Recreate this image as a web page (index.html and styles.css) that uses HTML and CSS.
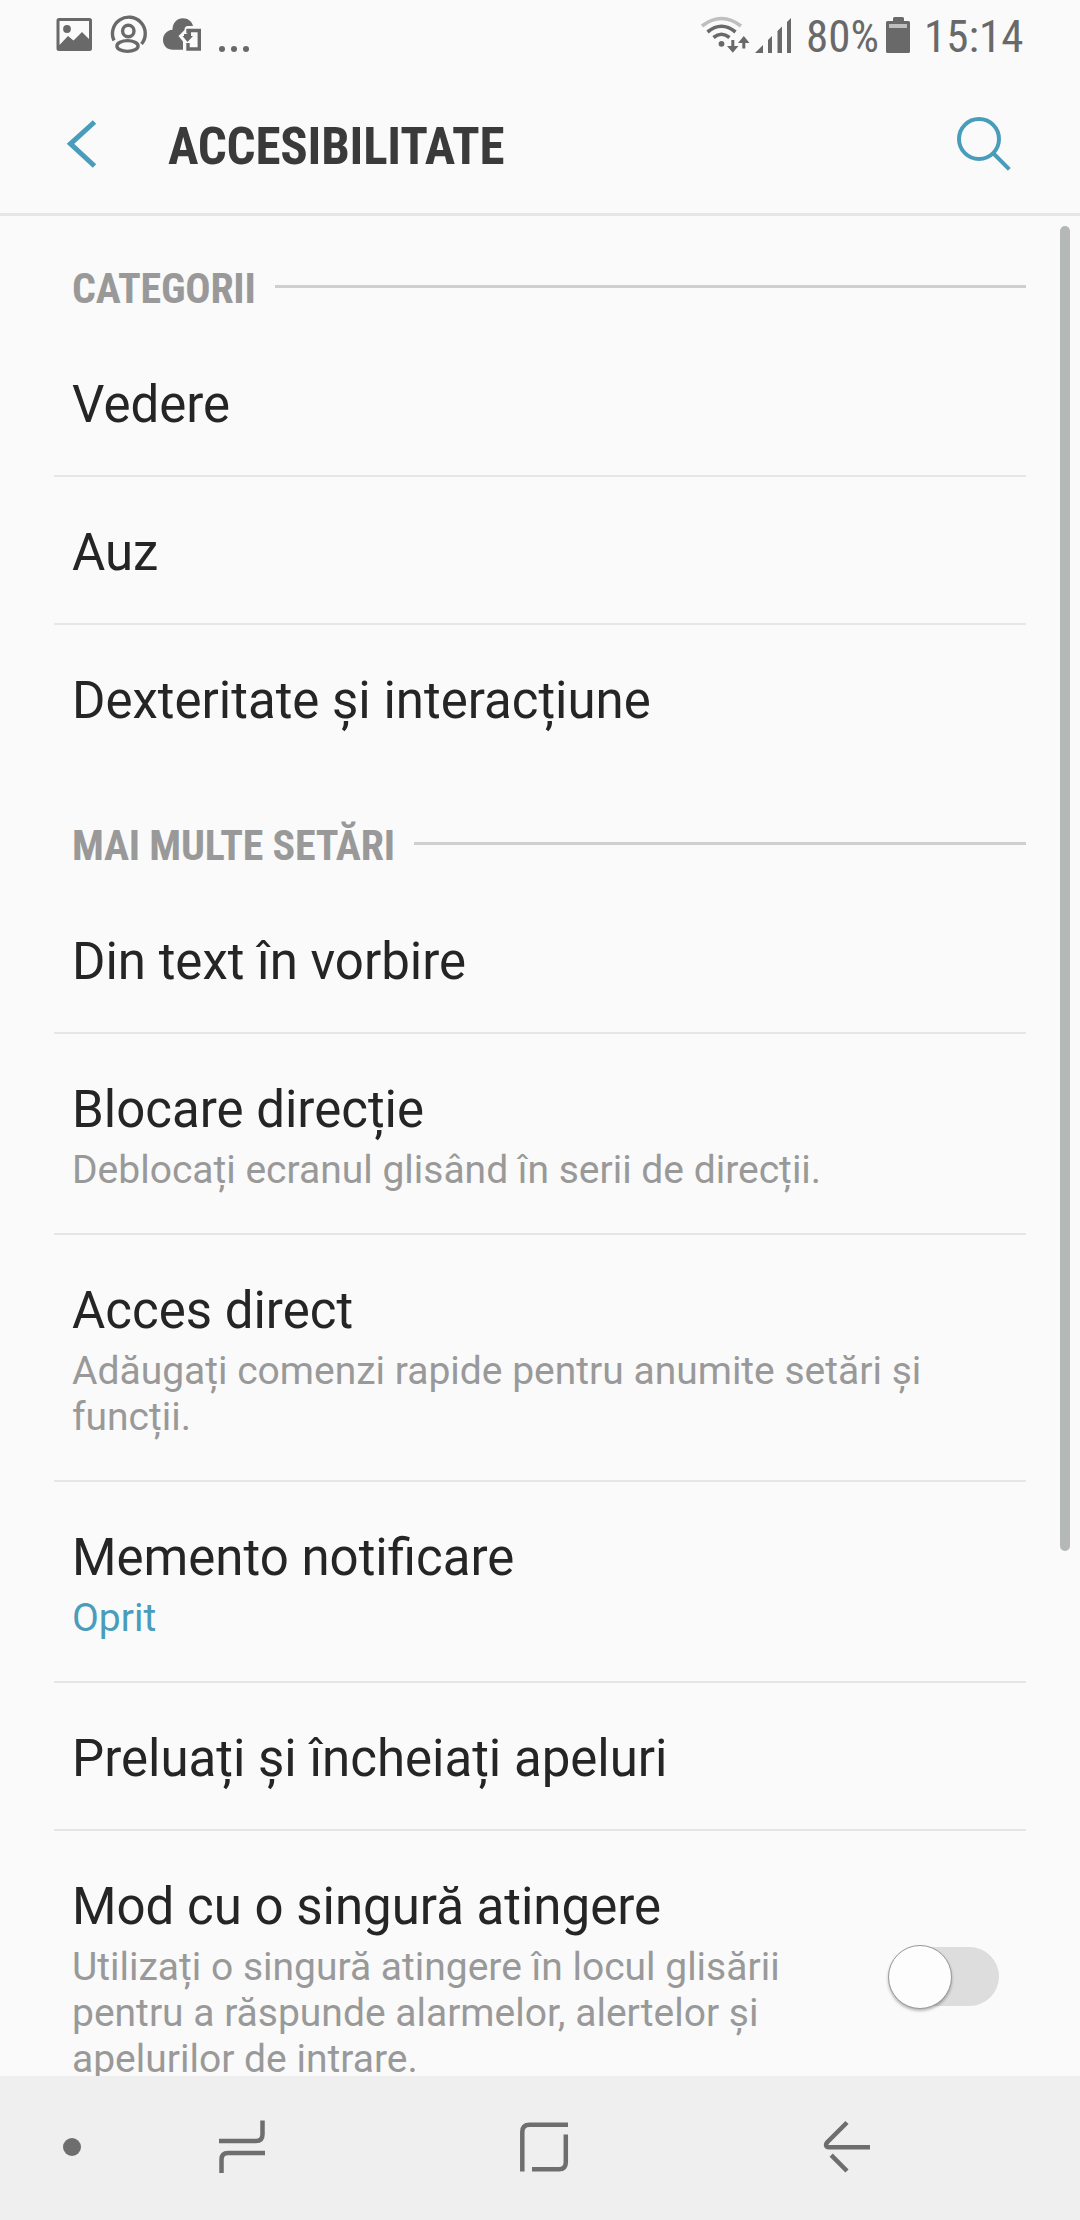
FILE: index.html
```html
<!DOCTYPE html>
<html lang="ro">
<head>
<meta charset="utf-8">
<title>Accesibilitate</title>
<link rel="stylesheet" href="styles.css">
</head>
<body>
<div class="screen">
  <header class="statusbar">
    <svg class="notifications" width="210" height="72" viewBox="40 0 210 72">
      <path fill="#696969" fill-rule="evenodd" d="M59 18H89.500Q92 18 92 20.500V48.500Q92 51 89.500 51H59Q56.500 51 56.500 48.500V20.500Q56.500 18 59 18ZM59.500 21V45L68 36L73.500 40.500L82 32L89 39V21Z"/>
      <circle cx="67" cy="29" r="3.900" fill="#696969"/>
      <g fill="none" stroke="#696969" stroke-width="3.400">
        <path d="M114 40.500A16.400 16.400 0 1 1 141.500 44"/>
        <circle cx="128.300" cy="31" r="5.700"/>
        <ellipse cx="127.500" cy="46" rx="10.600" ry="5.400"/>
      </g>
      <path fill="#696969" d="M183 49.800H173C167 49.800 163 45.500 163 40C163 34.500 167 30.300 172.500 29.800C172.500 23 177 18.300 183 18.300C188 18.300 192 21.500 193 26H188Q184.500 26 184.500 30L178.500 36L183 41.500Z"/>
      <path fill="none" stroke="#696969" stroke-width="3.400" d="M188 33.500V30.500H199.300V49H188V43"/>
      <path fill="#696969" d="M183 36H191V29.500H187.500V34H184V36ZM182.500 36H193L187.500 42Z"/>
      <g fill="#696969"><circle cx="222" cy="49" r="3"/><circle cx="234" cy="49" r="3"/><circle cx="246" cy="49" r="3"/></g>
    </svg>
    <div class="system">
      <svg width="92" height="72" viewBox="700 0 92 72">
        <g fill="none" stroke="#696969" stroke-width="3.600">
          <path stroke="#bfbfbf" d="M702 26Q721.500 11 741 26"/>
          <path d="M707.500 32Q721.500 20.500 735.500 32"/>
          <path d="M713.500 37.500Q721.500 31 729.500 37.500"/>
          <path stroke-width="3" d="M732.800 40V49M743.800 48.500V40"/>
        </g>
        <path fill="#696969" d="M727 46H738.500L732.800 52.800ZM738 43H749.500L743.800 36Z"/>
        <circle cx="721.500" cy="43.800" r="2.900" fill="#696969"/>
        <path fill="#696969" d="M755 53L763 45V53ZM768 53V40L772 36V53ZM777.500 53V31L782 26.500V53ZM787 53V22L791 18V53Z"/>
      </svg>
      <span class="battery-text condensed">80%</span>
      <svg class="battery" width="24" height="72" viewBox="886 0 24 72">
        <path fill="#696969" d="M893 21V18.500Q893 17 894.500 17H902.500Q904 17 904 18.500V21H908.500Q910 21 910 22.500V51.500Q910 53 908.500 53H887.500Q886 53 886 51.500V22.500Q886 21 887.500 21Z"/>
        <path fill="#bfbfbf" d="M889 24H907V28H889Z"/>
      </svg>
      <span class="clock condensed">15:14</span>
    </div>
  </header>

  <div class="appbar">
    <svg class="back" width="30" height="50" viewBox="67 119 30 50"><path fill="none" stroke="#4a9dba" stroke-width="5" d="M94.500 122L70.500 143.800L94.500 166"/></svg>
    <h1 class="condensed">ACCESIBILITATE</h1>
    <svg class="search" width="56" height="56" viewBox="956 115 56 56"><g fill="none" stroke="#4a9dba" stroke-width="4"><circle cx="979" cy="139" r="20"/><path d="M993.500 153.500L1009.300 169.300"/></g></svg>
  </div>

  <main class="content">
    <h2 class="section"><span class="condensed">CATEGORII</span></h2>
    <ul class="list">
      <li class="row"><div class="title">Vedere</div></li>
      <li class="row"><div class="title">Auz</div></li>
      <li class="row"><div class="title">Dexteritate și interacțiune</div></li>
    </ul>
    <h2 class="section"><span class="condensed">MAI MULTE SETĂRI</span></h2>
    <ul class="list">
      <li class="row"><div class="title">Din text în vorbire</div></li>
      <li class="row"><div class="title">Blocare direcție</div><p>Deblocați ecranul glisând în serii de direcții.</p></li>
      <li class="row"><div class="title">Acces direct</div><p>Adăugați comenzi rapide pentru anumite setări și<br>funcții.</p></li>
      <li class="row"><div class="title">Memento notificare</div><p class="state">Oprit</p></li>
      <li class="row"><div class="title">Preluați și încheiați apeluri</div></li>
      <li class="row with-switch">
        <div><div class="title">Mod cu o singură atingere</div><p>Utilizați o singură atingere în locul glisării<br>pentru a răspunde alarmelor, alertelor și<br>apelurilor de intrare.</p></div>
        <div class="switch"><div class="thumb"></div></div>
      </li>
    </ul>
    <div class="scrollbar"></div>
  </main>

  <nav class="navbar">
    <svg width="1080" height="144" viewBox="0 2076 1080 144">
      <circle cx="72" cy="2147" r="9" fill="#6e6e6e"/>
      <g fill="none" stroke="#6e6e6e" stroke-width="4.500">
        <path d="M219 2141H256Q262.500 2141 262.500 2134.500V2120.500"/>
        <path d="M265 2153H228Q221.500 2153 221.500 2159.500V2173"/>
        <path d="M568 2124.700H529.500Q522.300 2124.700 522.300 2132V2171.500"/>
        <path d="M532 2169.200H559Q565.800 2169.200 565.800 2162.500V2134.500"/>
        <path d="M847 2122.500L827.500 2142C825 2145 826 2147.200 829 2147.200H870"/>
        <path d="M831.200 2155.200L847 2171"/>
      </g>
    </svg>
  </nav>
</div>
</body>
</html>
```
FILE: styles.css
```css
* { box-sizing: border-box; }

body {
  margin: 0;
  background: #fafafa;
  font-family: Roboto, "Liberation Sans", sans-serif;
  color: #252525;
}

.screen {
  width: 1080px;
  height: 2220px;
  display: flex;
  flex-direction: column;
  overflow: hidden;
}

svg { display: block; flex: none; }

.condensed {
  font-family: "Roboto Condensed", Roboto, "Liberation Sans", sans-serif;
  font-stretch: 75%;
  white-space: nowrap;
}

.statusbar {
  flex: none;
  height: 72px;
  padding: 0 59px 0 40px;
  display: flex;
  justify-content: space-between;
}

.system {
  display: flex;
  color: #696969;
  font-size: 45px;
  line-height: 74px;
}

.battery-text { width: 71px; margin-left: 14px; }
.battery { margin-left: 9px; }
.clock { width: 97px; margin-left: 14px; }

.appbar {
  flex: none;
  height: 144px;
  padding: 0 68px 0 67px;
  display: flex;
  align-items: center;
  border-bottom: 3px solid #e6e6e6;
}

.back { margin-top: 3px; }

.appbar h1 {
  margin: 8px 0 0 71px;
  font-size: 51px;
  line-height: 60px;
  font-weight: 700;
  letter-spacing: -.2px;
  color: #3a3a3a;
}

.search { margin: 1px 0 0 auto; }

.content {
  position: relative;
  flex: 1;
  min-height: 0;
  overflow: hidden;
  padding: 0 54px;
}

.section {
  height: 113px;
  margin: 0;
  padding: 32px 0 0 18px;
  display: flex;
  align-items: center;
  gap: 19px;
  font-size: 42px;
  line-height: 50px;
  font-weight: 700;
  letter-spacing: -.25px;
  color: #999;
}

.section::after {
  content: "";
  flex: 1;
  height: 3px;
  margin-bottom: 4px;
  background: #cfcfcf;
}

.list { margin: 0; padding: 0; list-style: none; }

.row {
  min-height: 148px;
  padding: 46px 18px 40px;
  border-bottom: 2px solid #e6e6e6;
}

.row:last-child { border-bottom-color: transparent; }

.title { font-size: 51px; line-height: 60px; white-space: nowrap; }

.row p {
  margin: 7px 0 0;
  font-size: 39px;
  line-height: 46px;
  color: #999;
  white-space: nowrap;
}

.row .state { color: #4a9dba; }

.with-switch {
  display: flex;
  justify-content: space-between;
  padding-right: 27px;
}

.switch {
  width: 107px;
  height: 59px;
  margin-top: 70px;
  border-radius: 30px;
  background: #ddd;
}

.thumb {
  width: 64px;
  height: 64px;
  margin: -2px 0 0 -4px;
  border: 1px solid #999;
  border-radius: 50%;
  background: #fdfdfd;
  box-shadow: 0 2px 3px rgba(0, 0, 0, .28);
}

.scrollbar {
  position: absolute;
  top: 10px;
  right: 10px;
  width: 10px;
  height: 1325px;
  border-radius: 5px;
  background: #b4b8b7;
}

.navbar { flex: none; height: 144px; background: #efefef; }
```
